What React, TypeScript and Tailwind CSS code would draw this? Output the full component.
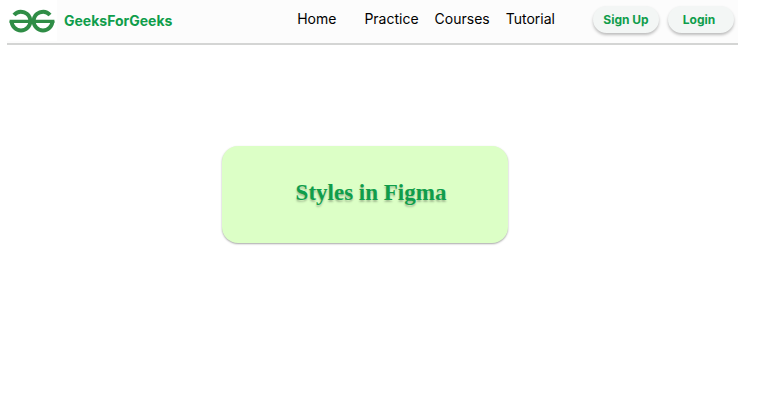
const Logo = () => {
    return (
        <svg
            viewBox="0 0 46 24"
            className="h-6 w-[46px]"
            fill="none"
            stroke="#2f8d46"
            strokeWidth="4"
            aria-hidden="true"
        >
            {/* left, mirrored G */}
            <path d="M5 6A9.4 9.4 0 0 1 21.4 12A9.4 9.4 0 0 1 2.6 12" />
            {/* right G */}
            <path d="M41 6A9.4 9.4 0 0 0 24.6 12A9.4 9.4 0 0 0 43.4 12" />
            <path d="M0.6 12.4H45.4" strokeWidth="3.4" />
        </svg>
    );
};

const Header = () => {
    return (
        <header className="ml-[7px] mr-8 flex h-[45px] items-start border-b-2 border-[#d4d5d4] bg-[#fcfcfc] pr-1">
            {/* Brand */}
            <a href="#" className="flex items-center text-[#0f9d4b]">
                <span className="flex h-[41px] w-[50px] items-center justify-center bg-white">
                    <Logo />
                </span>
                <span className="ml-[7px] pt-px text-sm font-bold">GeeksForGeeks</span>
            </a>

            {/* Navigation */}
            <nav className="ml-auto flex pt-[9px] text-sm text-black">
                <a href="#" className="mr-7">Home</a>
                <a href="#" className="mr-4">Practice</a>
                <a href="#" className="mr-4">Courses</a>
                <a href="#">Tutorial</a>
            </nav>

            {/* Account */}
            <div className="ml-[38px] flex gap-[9px] pt-[6px]">
                <button
                    type="button"
                    className="h-[27px] w-[66px] rounded-full bg-[#f3f6f5] text-xs font-bold text-[#0f9d4b] shadow-[0_2px_3px_rgba(0,0,0,0.25)]"
                >
                    Sign Up
                </button>
                <button
                    type="button"
                    className="h-[27px] w-[66px] rounded-full bg-[#f3f6f5] pr-1 text-xs font-bold text-[#0f9d4b] shadow-[0_2px_3px_rgba(0,0,0,0.25)]"
                >
                    Login
                </button>
            </div>
        </header>
    );
};

const App = () => {
    return (
        <div className="min-h-screen bg-white font-['Inter',sans-serif]">
            <Header />
            <main className="flex justify-center pr-10 pt-[101px]">
                <section className="flex h-[97px] w-[286px] items-center justify-center rounded-2xl bg-[#dcffc6] pb-0.5 pl-3 shadow-[0_1px_2px_rgba(0,0,0,0.35)]">
                    <h1 className="font-['Liberation_Serif',serif] text-[23px] font-bold text-[#0f9d4b] [text-shadow:0_2px_2px_rgba(0,0,0,0.25)]">
                        Styles in Figma
                    </h1>
                </section>
            </main>
        </div>
    );
};

export default App;
